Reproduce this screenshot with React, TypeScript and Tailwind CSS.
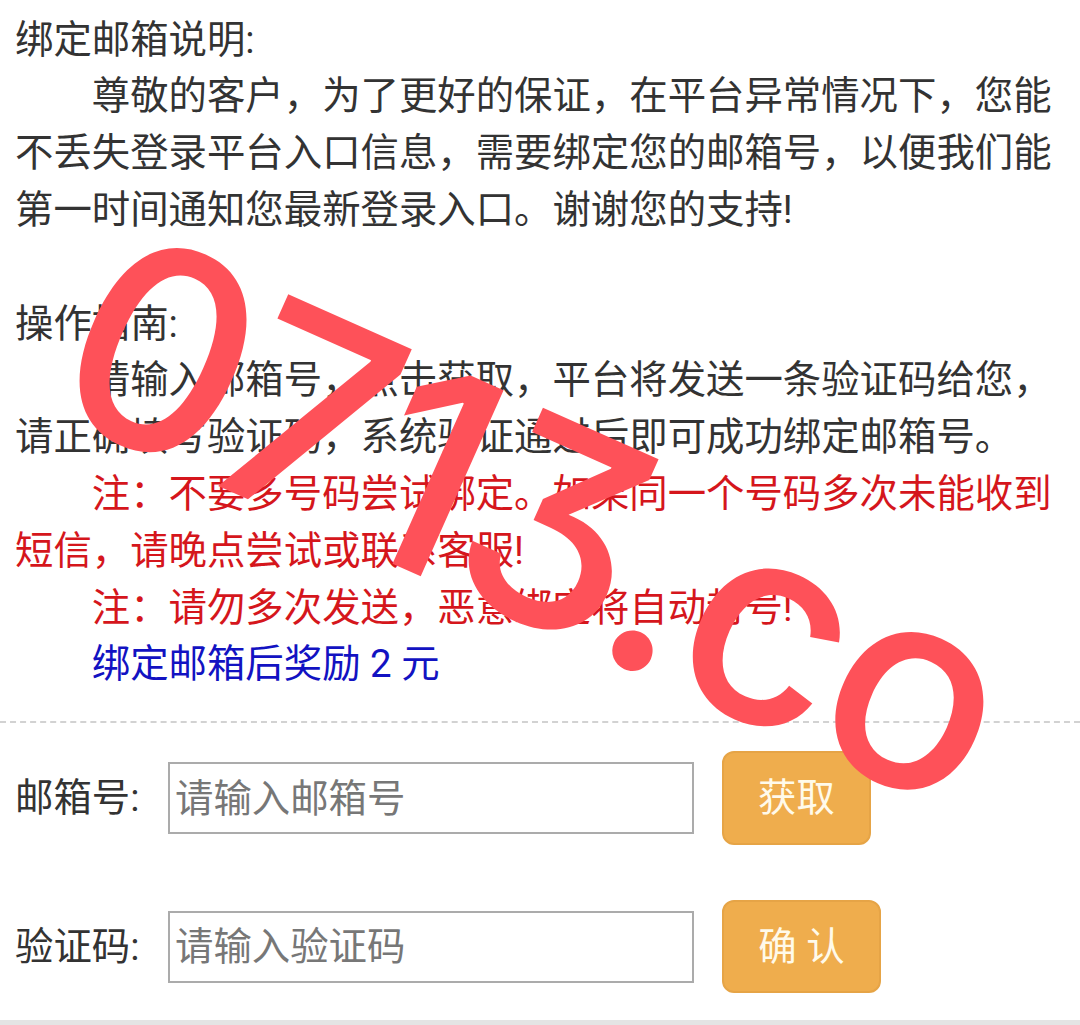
import React from "react";

export default function App() {
  return (
    <div className="relative w-[1080px] min-h-[1025px] overflow-hidden bg-[#e4e4e4] font-['Roboto','Noto_Sans_CJK_SC',sans-serif]">
      <div className="bg-white pb-[27px]">
        <div className="px-[15px] pt-[11.6px] text-[38.4px] leading-[56.8px] text-[#333]">
          <p>绑定邮箱说明:</p>
          <p className="indent-[2em]">
            尊敬的客户，为了更好的保证，在平台异常情况下，您能不丢失登录平台入口信息，需要绑定您的邮箱号，以便我们能第一时间通知您最新登录入口。谢谢您的支持!
          </p>
          <p>&nbsp;</p>
          <p>操作指南:</p>
          <p className="indent-[2em]">
            请输入邮箱号，点击获取，平台将发送一条验证码给您，请正确填写验证码，系统验证通过后即可成功绑定邮箱号。
          </p>
          <p className="indent-[2em] text-[#d5161c]">
            注：不要多号码尝试绑定。如果同一个号码多次未能收到短信，请晚点尝试或联系客服!
          </p>
          <p className="indent-[2em] text-[#d5161c]">
            注：请勿多次发送，恶意绑定将自动封号!
          </p>
          <p className="indent-[2em] text-[#1212c2]">绑定邮箱后奖励 2 元</p>
        </div>

        <div className="mt-[28px] border-t-2 border-dashed border-[#d2d2d2]" />

        <div className="mt-[28px] flex h-[94px] items-center text-[38.4px] text-[#333]">
          <div className="w-[168px] pl-[15px]">邮箱号:</div>
          <input
            className="h-[72px] w-[526px] border-2 border-[#ababab] bg-white px-[5px] text-[38.4px] text-[#333] outline-none placeholder:text-[#777]"
            placeholder="请输入邮箱号"
          />
          <button className="ml-[28px] h-[94px] w-[149px] rounded-[12px] border-2 border-[#e6a446] bg-[#efad4d] text-[38.4px] text-[#fffaea]">
            获取
          </button>
        </div>

        <div className="mt-[55px] flex h-[93px] items-center text-[38.4px] text-[#333]">
          <div className="w-[168px] pl-[15px]">验证码:</div>
          <input
            className="h-[72px] w-[526px] border-2 border-[#ababab] bg-white px-[5px] text-[38.4px] text-[#333] outline-none placeholder:text-[#777]"
            placeholder="请输入验证码"
          />
          <button className="ml-[28px] h-[93px] w-[159px] rounded-[12px] border-2 border-[#e6a446] bg-[#efad4d] text-[38.4px] text-[#fffaea]">
            确 认
          </button>
        </div>
      </div>

      <div className="pointer-events-none absolute left-[536px] top-[517px] -translate-x-1/2 -translate-y-1/2 rotate-[24deg] whitespace-nowrap font-['Inter',sans-serif] text-[280px] font-medium leading-none tracking-[-0.02em] text-[#fe5159] [font-feature-settings:'cv09']">
        0713.co
      </div>
    </div>
  );
}
